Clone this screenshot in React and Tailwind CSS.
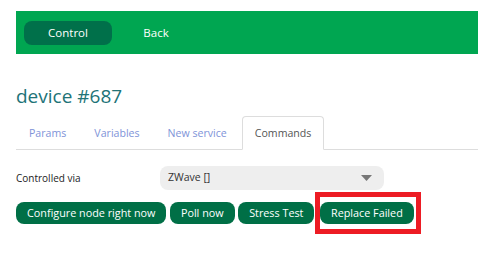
const tabs = ["Params", "Variables", "New service", "Commands"];
const actions = ["Configure node right now", "Poll now", "Stress Test"];

export default function App() {
  return (
    <div className="w-[478px] h-[265px] bg-white pl-4 overflow-hidden" style={{ fontFamily: '"Open Sans", sans-serif' }}>
      <nav className="mt-[11px] h-[43px] bg-[#00a651] flex items-center pl-2">
        <button className="w-[88px] h-6 rounded-lg bg-[#00704a] text-white text-[11.5px]">Control</button>
        <button className="w-[88px] h-6 text-white text-[11.5px]">Back</button>
      </nav>

      <h1 className="mt-[33px] text-[19px] leading-none text-[#217377]">device #687</h1>

      <ul className="mt-[10px] flex h-[34px] border-b border-[#dddddd]">
        {tabs.map((t) => {
          const active = t === "Commands";
          return (
            <li
              key={t}
              className={
                active
                  ? "h-[34px] mr-[2px] px-3 pt-[2px] flex items-center text-[10.6px] text-[#555555] bg-white border border-[#dddddd] border-b-white rounded-t-[4px]"
                  : "h-[34px] mr-[2px] px-3 pt-[2px] flex items-center text-[10.6px] text-[#8093d8] border border-transparent"
              }
            >
              {t}
            </li>
          );
        })}
      </ul>

      <div className="mt-4 flex items-center h-6">
        <span className="w-[144px] text-[10px] text-[#222222]">Controlled via</span>
        <div className="w-[224px] h-6 rounded-lg bg-[#eeeeee] flex items-center justify-between pl-2 pr-3">
          <span className="text-[10.5px] text-[#333333]">ZWave []</span>
          <svg width="11" height="6" viewBox="0 0 11 6">
            <path d="M0 0H11L5.5 6Z" fill="#777777" />
          </svg>
        </div>
      </div>

      <div className="mt-3 flex items-start gap-[3.5px]">
        {actions.map((a) => (
          <button key={a} className="h-[22px] px-[11px] rounded-lg bg-[#006f46] text-white text-[10.8px]">
            {a}
          </button>
        ))}
        <div className="relative flex ml-[2px]">
          <button className="h-[22px] px-[11px] rounded-lg bg-[#006f46] text-white text-[10.8px]">Replace Failed</button>
          <span className="absolute -left-[5px] -right-[7px] -top-[10px] -bottom-[10px] border-[5px] border-[#ed1c24] pointer-events-none" />
        </div>
      </div>
    </div>
  );
}
